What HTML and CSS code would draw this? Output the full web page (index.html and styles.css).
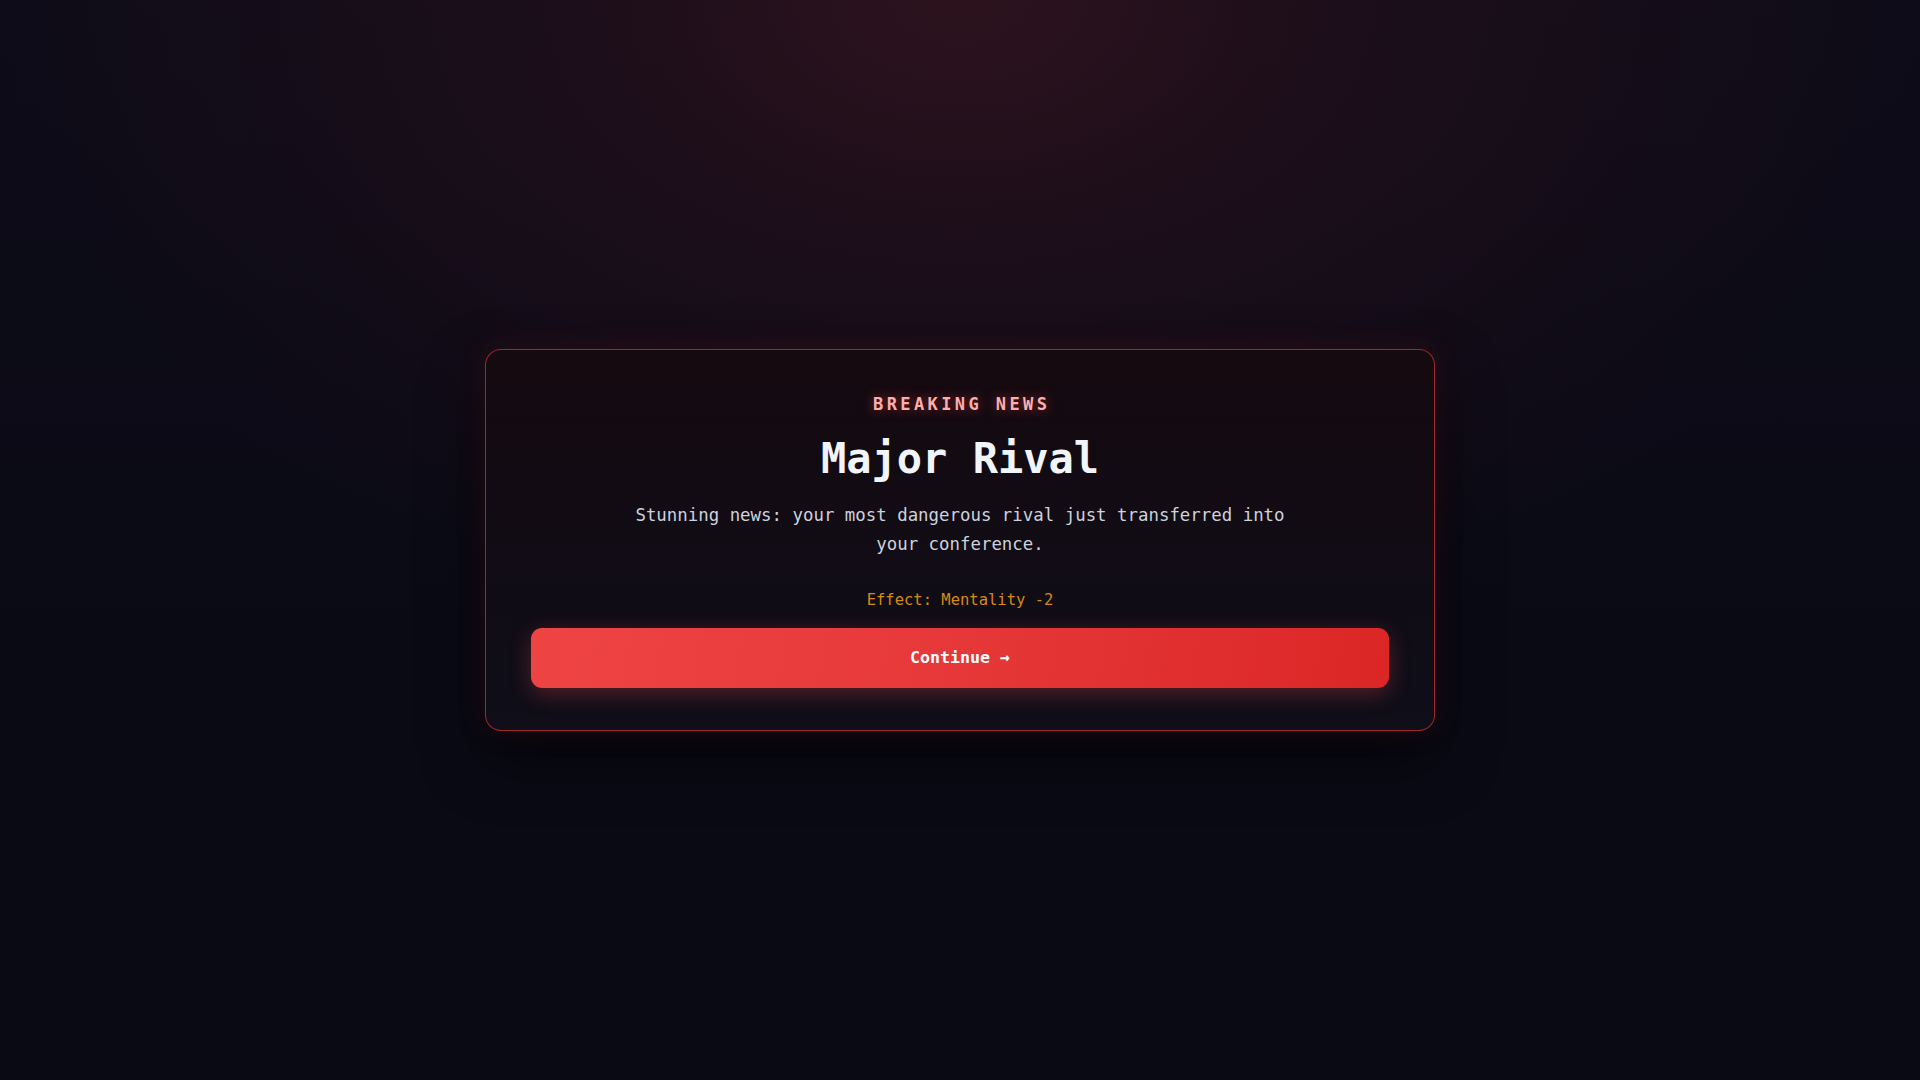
FILE: index.html
```html
<!DOCTYPE html>
<html lang="en">
<head>
<meta charset="utf-8">
<title>Breaking News</title>
<link rel="stylesheet" href="styles.css">
</head>
<body>
  <main class="stage">
    <section class="event-card">
      <div class="event-eyebrow">BREAKING NEWS</div>
      <h1 class="event-title">Major Rival</h1>
      <p class="event-text">Stunning news: your most dangerous rival just transferred into your conference.</p>
      <div class="event-effect">Effect: Mentality -2</div>
      <button class="event-continue" type="button">Continue →</button>
    </section>
  </main>
</body>
</html>
```
FILE: styles.css
```css
* {
  box-sizing: border-box;
}

html,
body {
  margin: 0;
  height: 100%;
}

body {
  font-family: "DejaVu Sans Mono", "Liberation Mono", monospace;
  background-color: #0a0a15;
  background-image:
    radial-gradient(ellipse 980px 640px at 50% 0%, rgba(46, 19, 30, 0.95) 0%, rgba(34, 15, 27, 0.7) 40%, rgba(10, 10, 21, 0) 100%),
    linear-gradient(180deg, #0d0c18 0%, #0a0a15 60%, #0a0a15 100%);
  color: #f1f5f9;
}

.stage {
  height: 100%;
  display: flex;
  align-items: center;
  justify-content: center;
}

.event-card {
  width: 950px;
  padding: 44px 45px 42px;
  border: 1px solid rgba(220, 50, 58, 0.7);
  border-radius: 16px;
  background: linear-gradient(180deg, #150a10 0%, #110c15 55%, #0f0e19 100%);
  box-shadow:
    0 0 30px rgba(220, 38, 38, 0.12),
    0 26px 60px rgba(0, 0, 0, 0.6);
  display: flex;
  flex-direction: column;
  align-items: center;
  text-align: center;
}

.event-eyebrow {
  font-size: 17px;
  line-height: 1.2;
  font-weight: 700;
  letter-spacing: 0.2em;
  margin-right: -0.2em;
  color: #fcaeae;
  text-shadow: 0 0 12px rgba(239, 68, 68, 0.55);
  margin-bottom: 19px;
}

.event-title {
  margin: 0 0 17px;
  font-size: 42px;
  line-height: 1.2;
  font-weight: 700;
  color: #f1f5f9;
}

.event-text {
  margin: 0;
  max-width: 680px;
  font-size: 17.4px;
  line-height: 1.67;
  color: #cdd2dd;
}

.event-effect {
  margin-top: 31px;
  font-size: 15.5px;
  line-height: 1.4;
  color: #d68a10;
}

.event-continue {
  margin-top: 16px;
  width: 100%;
  height: 60px;
  border: 0;
  border-radius: 11px;
  background: linear-gradient(100deg, #ef4444 0%, #e63838 50%, #dc2626 100%);
  box-shadow: 0 6px 22px rgba(239, 68, 68, 0.3);
  color: #ffffff;
  font-family: inherit;
  font-size: 16.6px;
  font-weight: 700;
  cursor: pointer;
}
```
